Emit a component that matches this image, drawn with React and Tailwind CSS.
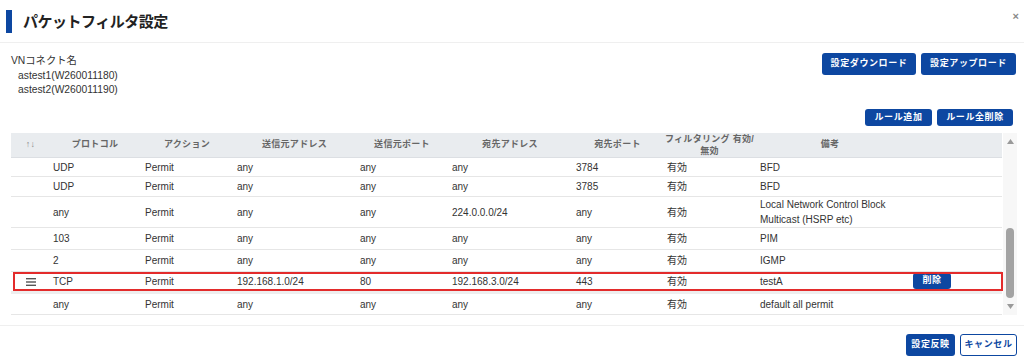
import React from "react";

const FONT = { fontFamily: '"Liberation Sans", "Noto Sans CJK JP", sans-serif' };

const rows = [
  { h: "h-[19px]", p: "UDP", a: "Permit", sa: "any", sp: "any", da: "any", dp: "3784", f: "有効", n: "BFD" },
  { h: "h-[20px]", p: "UDP", a: "Permit", sa: "any", sp: "any", da: "any", dp: "3785", f: "有効", n: "BFD" },
  { h: "h-[31px]", p: "any", a: "Permit", sa: "any", sp: "any", da: "224.0.0.0/24", dp: "any", f: "有効", n: "Local Network Control Block\nMulticast (HSRP etc)" },
  { h: "h-[22px]", p: "103", a: "Permit", sa: "any", sp: "any", da: "any", dp: "any", f: "有効", n: "PIM" },
  { h: "h-[22px]", p: "2", a: "Permit", sa: "any", sp: "any", da: "any", dp: "any", f: "有効", n: "IGMP" },
  { h: "h-[22px]", p: "TCP", a: "Permit", sa: "192.168.1.0/24", sp: "80", da: "192.168.3.0/24", dp: "443", f: "有効", n: "testA", sel: true },
  { h: "h-[21px]", p: "any", a: "Permit", sa: "any", sp: "any", da: "any", dp: "any", f: "有効", n: "default all permit" },
];

const GRID = "grid grid-cols-[38px_92px_92px_123px_92px_124px_91px_93px_148px_1fr]";

function Btn({ children, className = "" }) {
  return (
    <button className={`bg-[#0d47a1] text-white font-bold text-[9px] tracking-[0.6px] rounded-[3px] flex items-center justify-center ${className}`}>
      {children}
    </button>
  );
}

export default function App() {
  return (
    <div className="w-[1024px] h-[359px] bg-white overflow-hidden flex flex-col text-[#333]" style={FONT}>
      {/* title */}
      <div className="h-[43px] flex items-center border-b border-[#efefef] shrink-0">
        <div className="ml-[6px] w-[6px] h-[23px] bg-[#0d47a1]" />
        <div className="ml-[11px] text-[15px] font-bold tracking-[-0.5px] text-[#222] leading-none">パケットフィルタ設定</div>
        <div className="ml-auto mr-[5px] -mt-[10px] text-[11px] text-[#888] font-bold leading-none">×</div>
      </div>

      {/* top area */}
      <div className="h-[66px] flex justify-between pl-[11px] pr-[8px] pt-[10px] shrink-0">
        <div className="text-[10.3px] leading-[14.5px] text-[#333] pt-[1px]">
          <div>VNコネクト名</div>
          <div className="pl-[7px]">astest1(W260011180)</div>
          <div className="pl-[7px]">astest2(W260011190)</div>
        </div>
        <div className="flex gap-[5px]">
          <Btn className="w-[94px] h-[22px]">設定ダウンロード</Btn>
          <Btn className="w-[95px] h-[22px]">設定アップロード</Btn>
        </div>
      </div>
      <div className="h-[24px] flex justify-end pr-[11px] gap-[5px] shrink-0">
        <Btn className="w-[67px] h-[17px]">ルール追加</Btn>
        <Btn className="w-[76px] h-[17px]">ルール全削除</Btn>
      </div>

      {/* table */}
      <div className="flex pl-[11px] pr-[7px] shrink-0">
        <div className="w-[991px]">
          <div className={`${GRID} h-[25px] bg-[#e9ecef] items-center text-[9px] font-bold text-[#666] tracking-[0.3px] border-b border-[#dcdfe3]`}>
            <div className="text-center text-[9px] text-[#8a8a8a] font-normal pl-[1px]">↑↓</div>
            <div className="text-center">プロトコル</div>
            <div className="text-center">アクション</div>
            <div className="text-center">送信元アドレス</div>
            <div className="text-center">送信元ポート</div>
            <div className="text-center">宛先アドレス</div>
            <div className="text-center">宛先ポート</div>
            <div className="text-center leading-[12px]">フィルタリング 有効/<br />無効</div>
            <div className="text-center">備考</div>
            <div />
          </div>
          {rows.map((r, i) => (
            <div key={i} className={`${GRID} ${r.h} relative items-center text-[10px] border-b border-[#e6e6e6] ${r.sel ? "border-b-[3px] border-b-[#eeeeee]" : ""}`}>
              <div className="flex justify-center pl-[1px]">
                {r.sel && (
                  <svg width="10" height="8" viewBox="0 0 10 8">
                    <rect x="0" y="0" width="10" height="1.4" fill="#555" />
                    <rect x="0" y="3.3" width="10" height="1.4" fill="#555" />
                    <rect x="0" y="6.6" width="10" height="1.4" fill="#555" />
                  </svg>
                )}
              </div>
              <div className="pl-[4px]">{r.p}</div>
              <div className="pl-[4px]">{r.a}</div>
              <div className="pl-[4px]">{r.sa}</div>
              <div className="pl-[4px]">{r.sp}</div>
              <div className="pl-[4px]">{r.da}</div>
              <div className="pl-[4px]">{r.dp}</div>
              <div className="pl-[4px]">{r.f}</div>
              <div className="pl-[4px] whitespace-pre-line leading-[15px]">{r.n}</div>
              <div className="pl-[9px]">
                {r.sel && <Btn className="w-[38px] h-[16px] mb-[1px] tracking-[0.3px]">削除</Btn>}
              </div>
              {r.sel && <div className="absolute left-[2px] right-[-1px] top-0 h-[19px] border-2 border-[#e32b2b] pointer-events-none" />}
            </div>
          ))}
        </div>
        {/* scrollbar */}
        <div className="ml-[1px] w-[14px] h-[182px] bg-[#f7f7f7] flex flex-col items-center">
          <div className="h-[16px] flex items-center justify-center">
            <svg width="7" height="5" viewBox="0 0 7 5"><path d="M3.5 0 L7 5 L0 5 Z" fill="#9a9a9a" /></svg>
          </div>
          <div className="h-[79px]" />
          <div className="w-[8px] h-[70px] rounded-[4px] bg-[#a3a3a3]" />
          <div className="flex-1 flex items-center justify-center">
            <svg width="7" height="5" viewBox="0 0 7 5"><path d="M0 0 L7 0 L3.5 5 Z" fill="#9a9a9a" /></svg>
          </div>
        </div>
      </div>

      {/* footer */}
      <div className="mt-[10px] border-t border-[#efefef] flex justify-end gap-[5px] pr-[7px] pt-[8px]">
        <Btn className="w-[49px] h-[22px]">設定反映</Btn>
        <button className="w-[57px] h-[22px] border border-[#0d47a1] text-[#0d47a1] bg-white rounded-[3px] font-bold text-[9px] tracking-[0.6px] flex items-center justify-center">キャンセル</button>
      </div>
    </div>
  );
}
